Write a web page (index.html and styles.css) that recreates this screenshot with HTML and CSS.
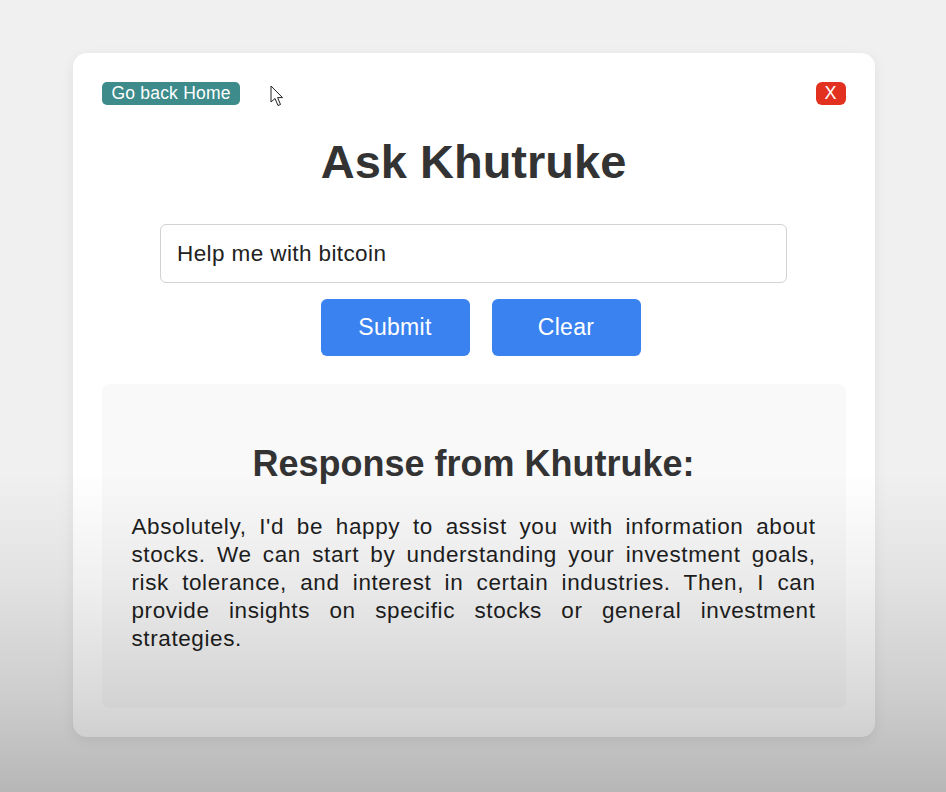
FILE: index.html
```html
<!DOCTYPE html>
<html>
<head>
<meta charset="utf-8">
<link rel="stylesheet" href="styles.css">
</head>
<body>
<div class="page">
  <div class="card">
    <div class="top-row">
      <button class="home-btn">Go back Home</button>
      <button class="close-btn">X</button>
    </div>
    <h1 class="title">Ask Khutruke</h1>
    <div class="input-wrap">
      <input class="query" type="text" value="Help me with bitcoin">
    </div>
    <div class="actions">
      <button class="action-btn">Submit</button>
      <button class="action-btn">Clear</button>
    </div>
    <div class="response">
      <h2 class="response-title">Response from Khutruke:</h2>
      <p class="response-text">Absolutely, I'd be happy to assist you with information about stocks. We can start by understanding your investment goals, risk tolerance, and interest in certain industries. Then, I can provide insights on specific stocks or general investment strategies.</p>
    </div>
  </div>
</div>
<svg class="cursor" width="16" height="24" viewBox="0 0 16 24">
  <path d="M1 1 L1 17 L5 13.5 L8 20.5 L10.5 19.5 L7.6 12.6 L12.5 12.6 Z" fill="#fff" stroke="#222" stroke-width="1" stroke-linejoin="round"/>
</svg>
<div class="shade"></div>
</body>
</html>
```
FILE: styles.css
```css
* { box-sizing: border-box; }
html, body { margin: 0; padding: 0; }
body {
  background: #f0f0f0;
  font-family: "Liberation Sans", Arial, sans-serif;
  width: 946px;
  height: 792px;
  overflow: hidden;
  position: relative;
}
.page {
  display: flex;
  justify-content: center;
  padding-top: 53px;
  padding-left: 1px;
}
.card {
  width: 802px;
  height: 684px;
  background: #fff;
  border-radius: 14px;
  box-shadow: 0 4px 14px rgba(0,0,0,0.07);
  padding: 29px 29px 29px 29px;
  display: flex;
  flex-direction: column;
}
.top-row {
  display: flex;
  justify-content: space-between;
  align-items: center;
  height: 23px;
}
.home-btn {
  background: #3d8b8b;
  color: #fff;
  border: none;
  border-radius: 5px;
  height: 23px;
  padding: 0 9px 0 10px;
  font-family: "Liberation Sans", Arial, sans-serif;
  font-size: 17.5px;
  letter-spacing: 0.2px;
  line-height: 23px;
}
.close-btn {
  background: #e2321f;
  color: #fff;
  border: none;
  border-radius: 6px;
  width: 30px;
  height: 23px;
  padding: 0;
  font-family: "Liberation Sans", Arial, sans-serif;
  font-size: 18px;
  line-height: 23px;
}
.title {
  margin: 29px 0 0;
  text-align: center;
  font-size: 47px;
  line-height: 56px;
  font-weight: bold;
  color: #333;
}
.input-wrap {
  display: flex;
  justify-content: center;
  margin-top: 34px;
}
.query {
  width: 627px;
  height: 59px;
  border: 1px solid #d2d2d2;
  border-radius: 6px;
  padding: 0 16px;
  font-family: "Liberation Sans", Arial, sans-serif;
  font-size: 22.5px;
  letter-spacing: 0.4px;
  color: #222;
  outline: none;
}
.actions {
  display: flex;
  justify-content: center;
  gap: 22px;
  margin-top: 16px;
  padding-left: 14px;
}
.action-btn {
  width: 149px;
  height: 57px;
  border: none;
  border-radius: 6px;
  background: #3b82f1;
  color: #fff;
  font-family: "Liberation Sans", Arial, sans-serif;
  font-size: 23px;
  letter-spacing: 0.3px;
}
.response {
  margin-top: 28px;
  height: 325px;
  background: #f9f9f9;
  border-radius: 8px;
  padding: 59px 30px 0;
}
.response-title {
  margin: 0;
  text-align: center;
  font-size: 36px;
  line-height: 42px;
  font-weight: bold;
  color: #333;
}
.response-text {
  margin: 28px 0 0;
  font-size: 22.5px;
  letter-spacing: 0.6px;
  line-height: 28px;
  color: #1e1e1e;
  text-align: justify;
}
.cursor {
  position: absolute;
  left: 270px;
  top: 85px;
}
.shade {
  position: absolute;
  left: 0;
  top: 0;
  width: 946px;
  height: 792px;
  pointer-events: none;
  background: linear-gradient(to bottom, rgba(0,0,0,0) 0, rgba(0,0,0,0) 470px, rgba(0,0,0,0.06) 580px, rgba(0,0,0,0.15) 700px, rgba(0,0,0,0.24) 792px);
}
```
